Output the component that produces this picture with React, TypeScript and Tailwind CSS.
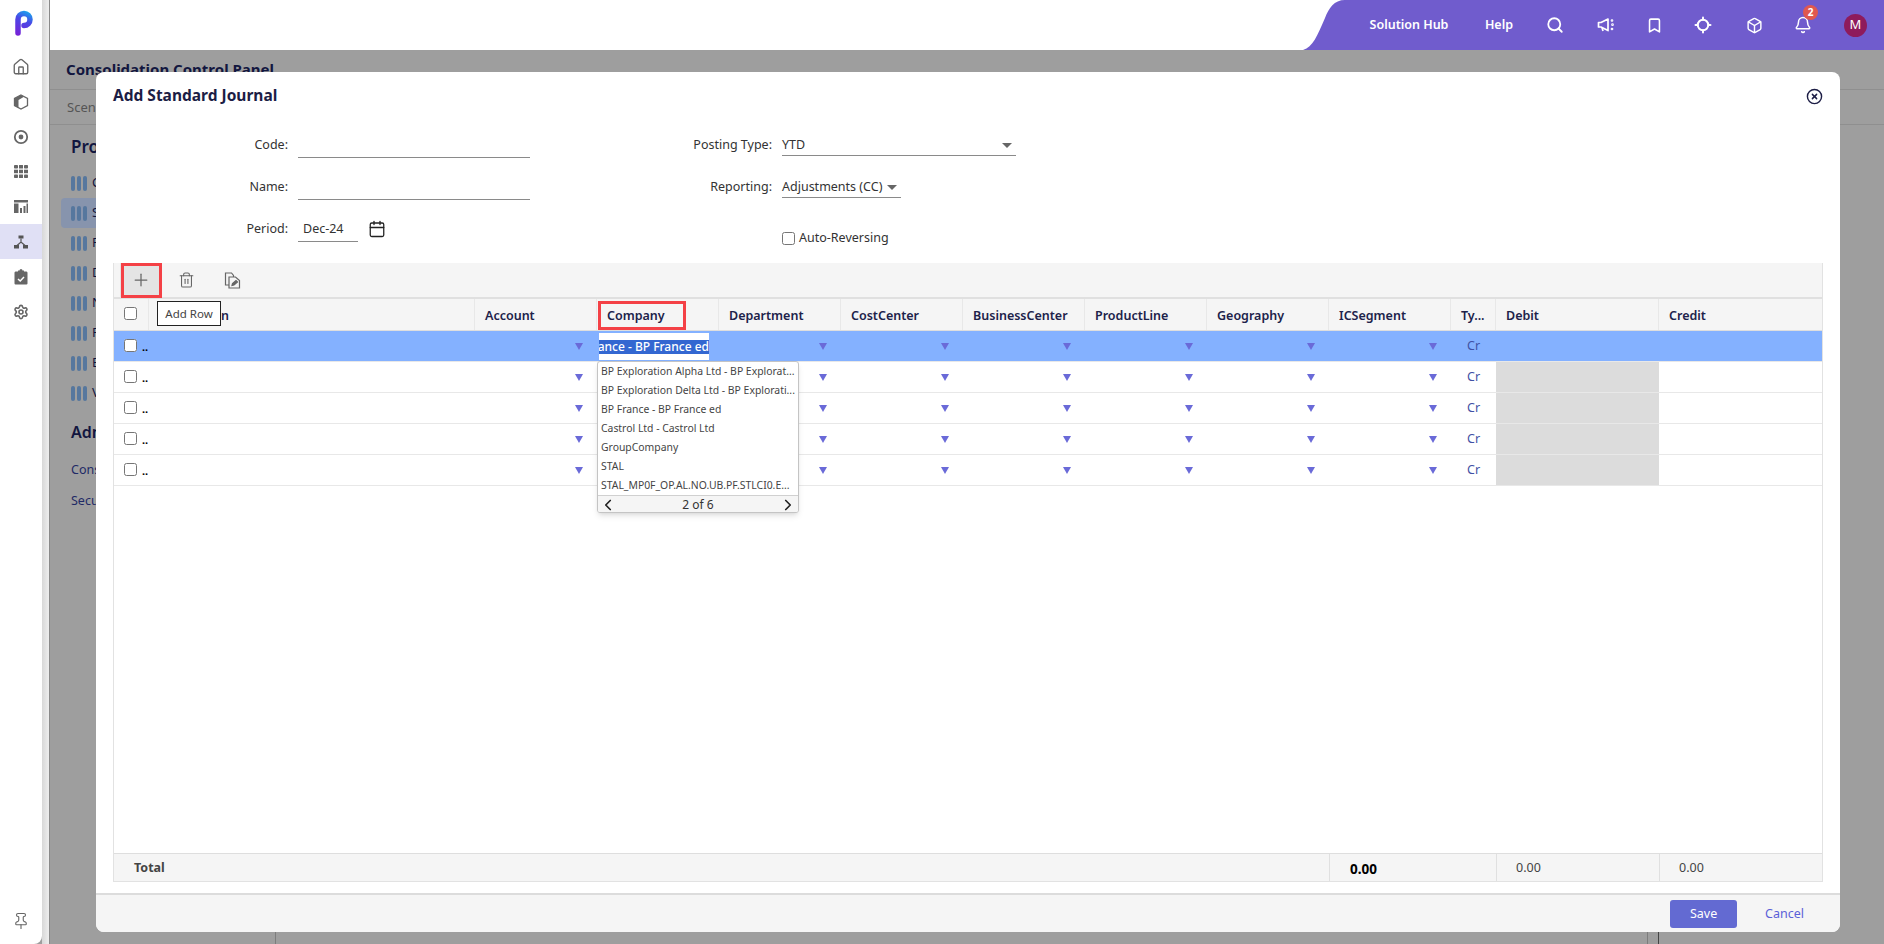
import { Bell, Bookmark, Box, Calendar, ChevronLeft, ChevronRight, CircleX, Home, Locate, Pin, Plus, Search, Settings, Trash2 } from "lucide-react"

const gridCols = "grid grid-cols-[35px_326px_repeat(8,122px)_45px_163px_163px]"

const headers = ["Account", "Company", "Department", "CostCenter", "BusinessCenter", "ProductLine", "Geography", "ICSegment"]

const companies = [
  "BP Exploration Alpha Ltd - BP Explorat...",
  "BP Exploration Delta Ltd - BP Explorati...",
  "BP France - BP France ed",
  "Castrol Ltd - Castrol Ltd",
  "GroupCompany",
  "STAL",
  "STAL_MP0F_OP.AL.NO.UB.PF.STLCI0.E...",
]

const panelItems = ["C", "S", "F", "D", "N", "F", "E", "V"]

function Logo() {
  return (
    <svg width="18" height="26" viewBox="0 0 18 26" fill="none">
      <defs>
        <linearGradient id="logoGrad" x1="14" y1="0" x2="2" y2="26" gradientUnits="userSpaceOnUse">
          <stop offset="0" stopColor="#12b5ee" />
          <stop offset="0.4" stopColor="#4a48e6" />
          <stop offset="1" stopColor="#7a1fd6" />
        </linearGradient>
      </defs>
      <path d="M3 23V9.500a6 6 0 1 1 6 6" stroke="url(#logoGrad)" strokeWidth="5.500" strokeLinecap="round" />
    </svg>
  )
}

function HalfBoxIcon() {
  return (
    <svg width="16" height="16" viewBox="0 0 16 16" fill="#666">
      <path d="M8 1 14.500 4.500V11.500L8 15 1.500 11.500V4.500Z" fill="none" stroke="#666" strokeWidth="1.300" />
      <path d="M1.500 4.500 8 1l3 1.700L5.500 6v8L1.500 11.500Z" />
    </svg>
  )
}

function TargetIcon() {
  return (
    <svg width="16" height="16" viewBox="0 0 16 16" fill="none">
      <circle cx="8" cy="8" r="6.200" stroke="#666" strokeWidth="1.800" />
      <circle cx="8" cy="8" r="2.400" fill="#666" />
    </svg>
  )
}

function GridIcon() {
  return (
    <svg width="14" height="13" viewBox="0 0 14 13" fill="#666">
      <rect x="0" y="0" width="4" height="3.500" rx="0.800" />
      <rect x="5" y="0" width="4" height="3.500" rx="0.300" />
      <rect x="10" y="0" width="4" height="3.500" rx="0.800" />
      <rect x="0" y="4.700" width="4" height="3.500" />
      <rect x="5" y="4.700" width="4" height="3.500" />
      <rect x="10" y="4.700" width="4" height="3.500" />
      <rect x="0" y="9.500" width="4" height="3.500" rx="0.800" />
      <rect x="5" y="9.500" width="4" height="3.500" rx="0.300" />
      <rect x="10" y="9.500" width="4" height="3.500" rx="0.800" />
    </svg>
  )
}

function BarsIcon() {
  return (
    <svg width="14" height="13" viewBox="0 0 14 13" fill="#666">
      <rect x="0" y="0" width="14" height="2.500" />
      <rect x="0" y="3.500" width="4.500" height="9.500" />
      <rect x="6" y="8" width="2" height="5" />
      <rect x="9.500" y="6" width="2" height="7" />
      <rect x="12.500" y="3.500" width="1.500" height="9.500" />
    </svg>
  )
}

function HierarchyIcon() {
  return (
    <svg width="14" height="14" viewBox="0 0 14 14" fill="#555">
      <rect x="4.500" y="0.500" width="5" height="3" />
      <path d="M7 3.500V7M3 10.500 7 7l4 3.500" stroke="#555" strokeWidth="1.200" fill="none" />
      <rect x="0" y="10" width="5" height="3.500" />
      <rect x="9" y="10" width="5" height="3.500" />
    </svg>
  )
}

function ClipboardIcon() {
  return (
    <svg width="14" height="16" viewBox="0 0 14 16">
      <path d="M1.500 2.500h2.500V1.500h1.500a1.500 1.500 0 0 1 3 0H10v1h2.500A1.200 1.200 0 0 1 13.500 3.700V14.500a1.200 1.200 0 0 1-1 1h-11a1.200 1.200 0 0 1-1-1V3.700a1.200 1.200 0 0 1 1-1.200Z" fill="#666" />
      <path d="M4 10l2.200 2L10 8" stroke="#fff" strokeWidth="1.500" fill="none" />
    </svg>
  )
}

function MegaphoneIcon() {
  return (
    <svg width="18" height="16" viewBox="0 0 18 16" fill="none" stroke="#fff" strokeWidth="1.700" strokeLinejoin="round">
      <path d="M1.500 5.500v4.500h2.500l7 3.500V2L4 5.500Z" />
      <path d="M5 10.500 6 14" />
      <circle cx="15" cy="3.500" r="0.500" />
      <circle cx="15.500" cy="7.700" r="0.500" />
      <circle cx="15" cy="12" r="0.500" />
    </svg>
  )
}

function CopyEditIcon() {
  return (
    <svg width="17" height="17" viewBox="0 0 17 17" fill="none" stroke="#666" strokeWidth="1.200">
      <path d="M5 13H1.500V1h6l2 2.500V5" />
      <path d="M5 5h6.500l4 3.500v7.500H5Z" />
      <path d="M8 13.500l.5-2 3.500-3 1.500 1.500-3.500 3Z" fill="#666" />
    </svg>
  )
}

function Caret() {
  return <span className="block w-0 h-0 border-x-[4px] border-t-[7px] border-x-transparent border-t-[#6a6ad8]" />
}

function FormCaret() {
  return <span className="block w-0 h-0 border-x-[5px] border-t-[5px] border-x-transparent border-t-[#666]" />
}

function Sidebar() {
  const icons = [
    <Home key="home" size={18} color="#666" strokeWidth={1.8} />,
    <HalfBoxIcon key="box" />,
    <TargetIcon key="target" />,
    <GridIcon key="grid" />,
    <BarsIcon key="bars" />,
    <HierarchyIcon key="tree" />,
    <ClipboardIcon key="clip" />,
    <Settings key="gear" size={16} color="#666" strokeWidth={2.4} />,
  ]

  return (
    <aside className="w-[50px] shrink-0 flex bg-[#9e9e9e]">
      <div className="w-[42px] bg-white rounded-br-lg flex flex-col">
        <div className="h-[49px] pt-[10px] pl-[15px]">
          <Logo />
        </div>
        {icons.map((icon, i) => (
          <div key={i} className={`h-[35px] pr-[1px] flex items-center justify-center ${i === 5 ? "bg-[#e0e0f5]" : ""}`}>
            {icon}
          </div>
        ))}
        <div className="mt-auto h-[32px] flex justify-center">
          <Pin size={18} color="#666" strokeWidth={1.5} />
        </div>
      </div>
      <div className="w-[8px] bg-gradient-to-r from-[#d8d8d8] to-[#eeeeee] border-r border-[#8a8a8a]" />
    </aside>
  )
}

function TopBar() {
  return (
    <header className="h-[50px] bg-white flex justify-end">
      <svg width="42" height="50" viewBox="0 0 42 50" className="shrink-0">
        <path d="M0 50C10 47 14 36 22 18 26 8 31 0 42 0V50Z" fill="#705ccd" />
      </svg>
      <div className="w-[539px] bg-[#705ccd] flex items-center text-white text-[12.5px] font-semibold">
        <span className="ml-[24px] w-[80px] text-center">Solution Hub</span>
        <span className="ml-[30px] w-[40px] text-center">Help</span>
        <span className="ml-[26px] w-[20px] flex justify-center"><Search size={18} strokeWidth={2.4} /></span>
        <span className="ml-[31px] w-[20px] flex justify-center"><MegaphoneIcon /></span>
        <span className="ml-[28px] w-[20px] flex justify-center"><Bookmark size={17} strokeWidth={2.2} /></span>
        <span className="ml-[29px] w-[20px] flex justify-center"><Locate size={18} strokeWidth={2.6} /></span>
        <span className="ml-[31px] w-[20px] flex justify-center"><Box size={17} strokeWidth={2} /></span>
        <span className="relative ml-[29px] w-[20px] flex justify-center">
          <Bell size={18} strokeWidth={2} />
          <span className="absolute -top-[11px] left-[10px] w-[15px] h-[15px] rounded-full bg-[#e0584f] text-[10px] font-bold flex items-center justify-center">2</span>
        </span>
        <span className="ml-[31px] w-[23px] h-[23px] rounded-full bg-[#8e1b5c] flex items-center justify-center font-normal text-[13px]">M</span>
      </div>
    </header>
  )
}

// greyed page behind the dialog
function BackPage() {
  return (
    <main className="flex-1 bg-[#9e9e9e] flex flex-col text-[#12163f]">
      <div className="h-[40px] pl-[16px] pt-[7px] border-b border-[#8f8f8f] text-[15px] font-bold leading-[24px]">Consolidation Control Panel</div>
      <div className="h-[35px] pl-[17px] border-b border-[#8f8f8f] text-[13px] leading-[35px] text-[#555]">Scenario</div>
      <div className="flex-1 flex">
        <div className="w-[226px] border-r border-[#7d7d7d] pl-[11px] pt-[9px]">
          <div className="pl-[10px] h-[26px] text-[17px] font-semibold leading-[26px]">Process</div>
          <div className="mt-[8px]">
            {panelItems.map((item, i) => (
              <div key={i} className={`h-[30px] pl-[10px] flex items-center gap-[5px] rounded text-[13px] ${i === 1 ? "bg-[#8794ad]" : ""}`}>
                <span className="flex gap-[2px]">
                  <span className="w-[4px] h-[15px] rounded-full bg-[#56779e]" />
                  <span className="w-[4px] h-[15px] rounded-full bg-[#56779e]" />
                  <span className="w-[4px] h-[15px] rounded-full bg-[#56779e]" />
                </span>
                {item}
              </div>
            ))}
          </div>
          <div className="pl-[10px] mt-[11px] h-[26px] text-[16px] font-semibold leading-[26px]">Admin</div>
          <div className="pl-[10px] mt-[15px] text-[12.5px] leading-[20px] text-[#1f2a66]">Consolidation</div>
          <div className="pl-[10px] mt-[11px] text-[12.5px] leading-[20px] text-[#1f2a66]">Security</div>
        </div>
        <div className="w-[1372px] border-r border-[#7d7d7d]" />
        <div className="w-[11px] border-r border-[#444]" />
      </div>
    </main>
  )
}

function FormRow({ label, children, labelPad = "pb-[3px]" }: { label: string; children: React.ReactNode; labelPad?: string }) {
  return (
    <div className="h-[42px] flex items-end text-[12.5px]">
      <span className={`w-[96px] text-right text-[#333] pr-[10px] whitespace-nowrap ${labelPad}`}>{label}</span>
      {children}
    </div>
  )
}

function JournalTable() {
  return (
    <div className="mx-[17px] flex-1 flex flex-col border-x border-b border-[#e2e2e2]">
      <div className="h-[36px] bg-[#f5f5f5] border-b-2 border-[#e0e0e0] flex items-center">
        <div className="ml-[6px] w-[41px] h-[35px] flex items-center justify-center bg-[#e4e4e4]">
          <Plus size={20} color="#666" strokeWidth={1.5} />
        </div>
        <div className="ml-[17px] w-[17px] flex justify-center"><Trash2 size={18} color="#666" strokeWidth={1.5} /></div>
        <div className="ml-[29px] w-[17px] flex justify-center"><CopyEditIcon /></div>
      </div>
      <div className={`${gridCols} h-[32px] bg-[#f5f5f5] border-b border-[#dedede] text-[12.5px] font-semibold text-[#20224a]`}>
        <div className="border-r border-[#e8e8e8] flex items-center justify-center pb-[3px] pr-[2px]"><input type="checkbox" readOnly className="w-[13px] h-[13px]" /></div>
        <div className="border-r border-[#e8e8e8] pl-[10px] pt-[3px] flex items-center">Description</div>
        {headers.map((h) => (
          <div key={h} className="border-r border-[#e8e8e8] pl-[10px] pt-[3px] flex items-center">{h}</div>
        ))}
        <div className="border-r border-[#e8e8e8] pl-[10px] pt-[3px] flex items-center">Ty...</div>
        <div className="border-r border-[#e8e8e8] pl-[10px] pt-[3px] flex items-center">Debit</div>
        <div className="pl-[10px] pt-[3px] flex items-center">Credit</div>
      </div>
      <div className="flex-1">
        {[0, 1, 2, 3, 4].map((row) => (
          <div key={row} className={`${gridCols} h-[31px] border-b border-[#e8e8e8] ${row === 0 ? "bg-[#84b1ff]" : "bg-white"}`}>
            <div className="flex items-center justify-center pr-[2px] pb-[1px]"><input type="checkbox" readOnly className="w-[13px] h-[13px]" /></div>
            <div className="flex items-center -ml-[7px] text-[11px] font-bold leading-none">..</div>
            {headers.map((h) => (
              <div key={h} className="flex items-center justify-end pr-[14px]"><Caret /></div>
            ))}
            <div className="flex items-center pl-[16px] pt-[1px] text-[12.5px] text-[#3f51a5]">Cr</div>
            <div className={row === 0 ? "" : "bg-[#dcdcdc]"} />
            <div />
          </div>
        ))}
      </div>
      <div className={`${gridCols} h-[28px] bg-[#f5f5f5] border-t border-[#dedede] text-[12.5px]`}>
        <div className="col-span-2 pl-[20px] pt-[2px] font-bold text-[#444] flex items-center">Total</div>
        <div className="col-span-7" />
        <div className="col-span-2 pl-[20px] pt-[3px] border-l border-[#e0e0e0] font-bold text-black text-[13.5px] flex items-center">0.00</div>
        <div className="pl-[19px] pt-[2px] border-l border-[#e0e0e0] text-[#444] flex items-center">0.00</div>
        <div className="pl-[19px] pt-[2px] border-l border-[#e0e0e0] text-[#444] flex items-center">0.00</div>
      </div>
    </div>
  )
}

function CompanyDropdown() {
  return (
    <div className="absolute left-[501px] top-[289px] w-[202px] h-[152px] bg-white rounded-[3px] border border-[#c4c4c4] shadow-md flex flex-col overflow-hidden text-[#444] text-[10.4px]">
      <div className="flex-1">
        {companies.map((c) => (
          <div key={c} className="h-[19px] pl-[3px] leading-[19px] whitespace-nowrap">{c}</div>
        ))}
      </div>
      <div className="h-[19px] bg-[#f5f5f5] border-t border-[#d0d0d0] flex items-center justify-between px-[1px] text-[#333] text-[12px]">
        <ChevronLeft size={18} color="#222" strokeWidth={2.2} />
        <span>2 of 6</span>
        <ChevronRight size={18} color="#222" strokeWidth={2.2} />
      </div>
    </div>
  )
}

function JournalDialog() {
  return (
    <div className="absolute left-[96px] top-[72px] w-[1744px] h-[860px] bg-white rounded-lg flex flex-col">
      <div className="h-[44px] flex items-start justify-between px-[17px] pt-[12px]">
        <span className="text-[15.5px] font-bold text-[#1c1d45] leading-[22px]">Add Standard Journal</span>
        <CircleX size={17} color="#1c1d45" strokeWidth={2} className="mt-[4px]" />
      </div>

      <div className="h-[147px] flex">
        <div className="w-[106px] shrink-0" />
        <div className="w-[484px] shrink-0">
          <FormRow label="Code:">
            <input className="w-[232px] h-[24px] border-b border-[#8a8a8a] outline-none" />
          </FormRow>
          <FormRow label="Name:">
            <input className="w-[232px] h-[24px] border-b border-[#8a8a8a] outline-none" />
          </FormRow>
          <FormRow label="Period:">
            <div className="w-[60px] h-[25px] border-b border-[#8a8a8a] pl-[5px] text-[#333] leading-[24px]">Dec-24</div>
            <Calendar size={18} color="#222" strokeWidth={1.7} className="ml-[10px] mb-[4px]" />
          </FormRow>
        </div>
        <div className="-mt-[2px]">
          <FormRow label="Posting Type:" labelPad="pb-[1px]">
            <div className="w-[234px] h-[24px] border-b border-[#8a8a8a] pt-[3px] pr-[4px] flex items-center justify-between text-[#333]">
              YTD
              <FormCaret />
            </div>
          </FormRow>
          <FormRow label="Reporting:" labelPad="pb-[1px]">
            <div className="w-[119px] h-[24px] border-b border-[#8a8a8a] pt-[3px] flex items-center gap-[5px] text-[#333] whitespace-nowrap">
              Adjustments (CC)
              <FormCaret />
            </div>
          </FormRow>
          <div className="mt-[31px] ml-[96px] flex items-center gap-[4px] text-[12.5px] text-[#333]">
            <input type="checkbox" readOnly className="w-[13px] h-[13px]" />
            Auto-Reversing
          </div>
        </div>
      </div>

      <JournalTable />

      <div className="mt-[11px] h-[39px] pt-[1px] bg-[#f5f5f5] border-t-2 border-[#dcdcdc] rounded-b-lg flex items-center justify-end text-[12.5px]">
        <button className="w-[67px] h-[28px] rounded-[3px] bg-[#636ad2] text-white">Save</button>
        <span className="ml-[28px] mr-[36px] text-[#5b60d8]">Cancel</span>
      </div>

      {/* red marks and popups over the grid */}
      <div className="absolute left-[25px] top-[191px] w-[41px] h-[35px] border-[3px] border-[#f44146]" />
      <div className="absolute left-[61px] top-[229px] w-[64px] h-[25px] bg-white border border-[#222] text-[11.5px] text-[#444] flex items-center justify-center">Add Row</div>
      <div className="absolute left-[502px] top-[229px] w-[88px] h-[29px] border-[3px] border-[#f44146]" />
      <div className="absolute left-[503px] top-[261px] w-[110px] h-[27px] bg-white flex items-center justify-end overflow-hidden">
        <span className="bg-[#3367d1] text-white text-[12px] font-medium leading-[14px] whitespace-nowrap">BP France - BP France ed</span>
      </div>
      <CompanyDropdown />
    </div>
  )
}

export default function App() {
  return (
    <div className="relative w-[1884px] h-[944px] overflow-hidden flex bg-[#9e9e9e] font-['Noto_Sans',sans-serif]">
      <Sidebar />
      <div className="flex-1 flex flex-col">
        <TopBar />
        <BackPage />
      </div>
      <JournalDialog />
    </div>
  )
}
